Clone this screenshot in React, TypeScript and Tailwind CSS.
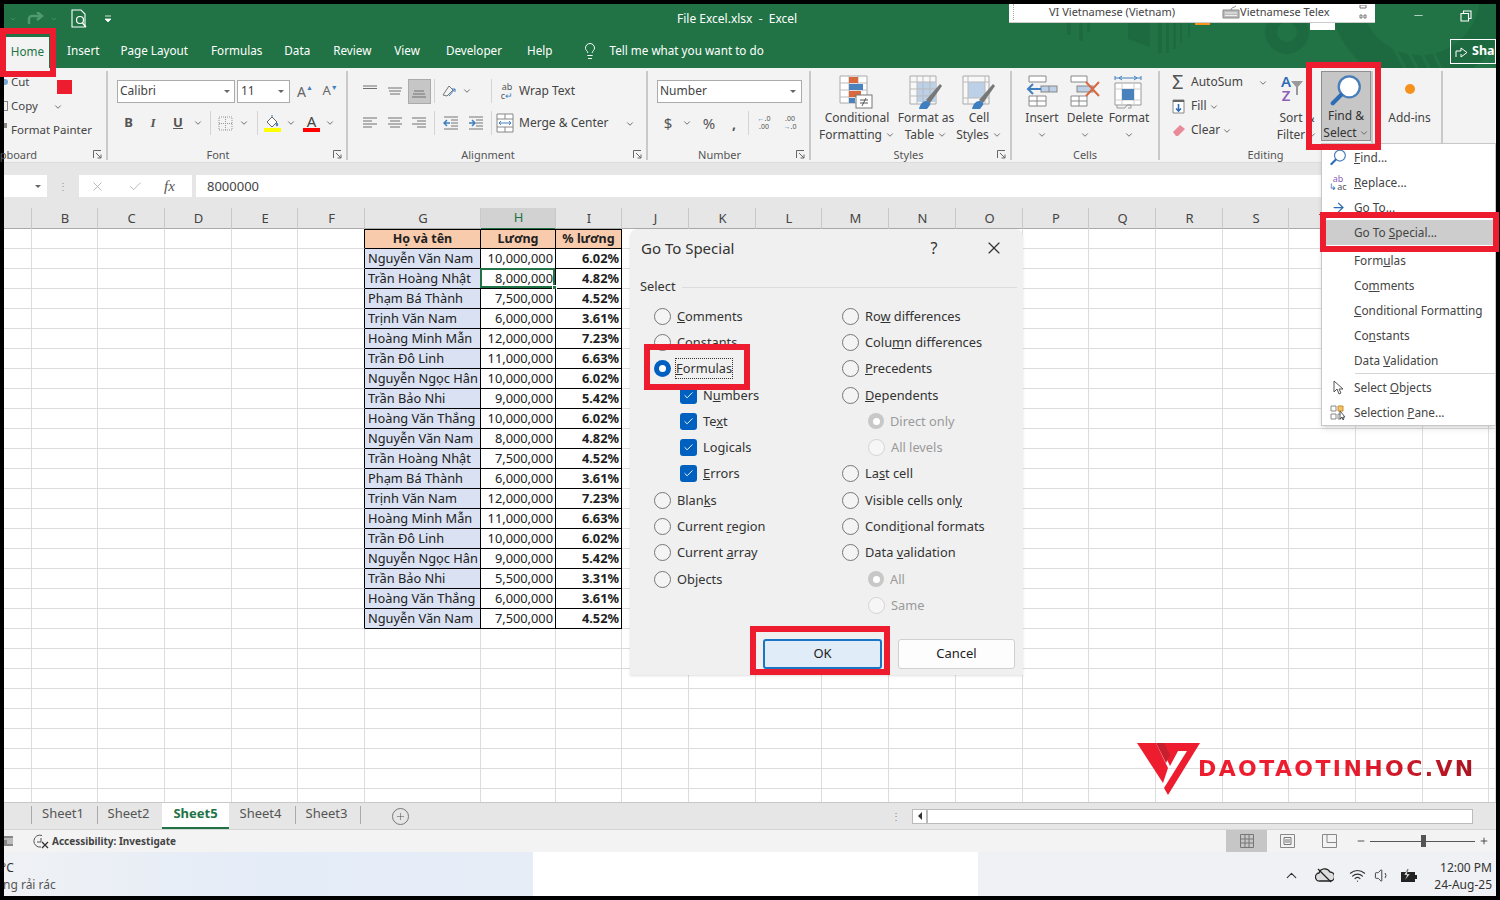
import React from "react";
import { ChevronDown, Lightbulb, X, Check, ArrowRight, Plus, ChevronUp, Wifi, Volume1, Minus } from "lucide-react";

const GRID = "grid grid-cols-[28px_66px_67px_67px_66px_67px_116px_75px_66px_67px_67px_66px_67px_67px_67px_66px_67px_67px_66px_67px_67px_66px_1fr]";
const COLS = ["", "B", "C", "D", "E", "F", "G", "H", "I", "J", "K", "L", "M", "N", "O", "P", "Q", "R", "S", "T", "U", "V", ""];

const DATA: [string, string, string][] = [
  ["Nguyễn Văn Nam", "10,000,000", "6.02%"],
  ["Trần Hoàng Nhật", "8,000,000", "4.82%"],
  ["Phạm Bá Thành", "7,500,000", "4.52%"],
  ["Trịnh Văn Nam", "6,000,000", "3.61%"],
  ["Hoàng Minh Mẫn", "12,000,000", "7.23%"],
  ["Trần Đô Linh", "11,000,000", "6.63%"],
  ["Nguyễn Ngọc Hân", "10,000,000", "6.02%"],
  ["Trần Bảo Nhi", "9,000,000", "5.42%"],
  ["Hoàng Văn Thắng", "10,000,000", "6.02%"],
  ["Nguyễn Văn Nam", "8,000,000", "4.82%"],
  ["Trần Hoàng Nhật", "7,500,000", "4.52%"],
  ["Phạm Bá Thành", "6,000,000", "3.61%"],
  ["Trịnh Văn Nam", "12,000,000", "7.23%"],
  ["Hoàng Minh Mẫn", "11,000,000", "6.63%"],
  ["Trần Đô Linh", "10,000,000", "6.02%"],
  ["Nguyễn Ngọc Hân", "9,000,000", "5.42%"],
  ["Trần Bảo Nhi", "5,500,000", "3.31%"],
  ["Hoàng Văn Thắng", "6,000,000", "3.61%"],
  ["Nguyễn Văn Nam", "7,500,000", "4.52%"],
];

function Mn({ t }: { t: string }) {
  const i = t.indexOf("_");
  if (i < 0) return <>{t}</>;
  return (
    <>
      {t.slice(0, i)}
      <span className="underline">{t[i + 1]}</span>
      {t.slice(i + 2)}
    </>
  );
}

const Chev = ({ s = 10 }: { s?: number }) => <ChevronDown size={s} strokeWidth={2} className="inline-block text-[#555] shrink-0" />;

function Lines({ kind }: { kind: string }) {
  const rows: Record<string, [number, number, number][]> = {
    top: [[1, 15, 3], [1, 15, 5.5]],
    mid: [[1, 15, 5], [2, 14, 8], [3, 13, 11]],
    bot: [[3, 13, 8], [2, 14, 11], [1, 15, 14]],
    left: [[1, 15, 3], [1, 10, 6], [1, 15, 9], [1, 10, 12]],
    center: [[1, 15, 3], [3, 13, 6], [1, 15, 9], [3, 13, 12]],
    right: [[1, 15, 3], [6, 15, 6], [1, 15, 9], [6, 15, 12]],
  };
  return (
    <svg width="16" height="16" viewBox="0 0 16 16">
      {rows[kind].map(([a, b, y], i) => (
        <line key={i} x1={a} x2={b} y1={y} y2={y} stroke="#707070" strokeWidth="1" />
      ))}
    </svg>
  );
}

function Launcher() {
  return (
    <svg width="9" height="9" viewBox="0 0 9 9" className="shrink-0">
      <path d="M0.5 8V0.5H8M3 3l5 5M8 4.5V8H4.5" fill="none" stroke="#666" strokeWidth="1" />
    </svg>
  );
}

function Group({ w, label, launcher, children, labelCls = "" }: { w: string; label?: string; launcher?: boolean; children: React.ReactNode; labelCls?: string }) {
  return (
    <div className={`${w} shrink-0 h-full flex flex-col border-r-2 border-[#c9c9c9] my-[3px] max-h-[89px]`}>
      <div className="h-[73px] shrink-0 -mt-[3px]">{children}</div>
      <div className="flex items-center h-4 mt-[5px] shrink-0">
        <div className={`flex-1 text-center text-[11px] text-[#555] leading-none ${labelCls}`}>{label}</div>
        {launcher && (
          <div className="w-[18px] flex justify-center">
            <Launcher />
          </div>
        )}
      </div>
    </div>
  );
}

function Large({ w, icon, l1, l2, cv }: { w: string; icon: React.ReactNode; l1: string; l2?: string; cv?: boolean }) {
  return (
    <div className={`${w} shrink-0 flex flex-col items-center`}>
      <div className="h-[41px] pt-[7px] flex items-start justify-center">{icon}</div>
      <div className="leading-[17px] text-[12px] text-[#444] whitespace-nowrap text-center">{l1}</div>
      <div className="leading-[17px] text-[12px] text-[#444] whitespace-nowrap h-[17px] flex items-center gap-[3px]">
        {l2}
        {cv && <Chev />}
      </div>
    </div>
  );
}

const CondIcon = () => (
  <svg width="36" height="34" viewBox="0 0 36 34">
    <path d="M1 1h27v27H1z" fill="#fff" stroke="#aaa" />
    <path d="M1 8h27M1 15h27M1 22h27M10 1v27M19 1v27" stroke="#bbb" />
    <rect x="10" y="2" width="9" height="6" fill="#d8693f" />
    <rect x="10" y="9" width="14" height="6" fill="#4a82bd" />
    <rect x="10" y="16" width="12" height="6" fill="#d8693f" />
    <rect x="10" y="23" width="6" height="5" fill="#4a82bd" />
    <rect x="17" y="20" width="16" height="13" fill="#fff" stroke="#777" />
    <path d="M21 25h8M21 28h8M27 23l-4 8" stroke="#555" />
  </svg>
);
const TableIcon = ({ cell }: { cell?: boolean }) => (
  <svg width="34" height="36" viewBox="0 0 34 36">
    <path d="M1 1h26v28H1z" fill="#f8f8f8" stroke="#aaa" />
    {cell ? (
      <>
        <rect x="6" y="7" width="17" height="16" fill="#bcd0e8" />
        <path d="M6 1v28M23 1v28M1 7h26M1 23h26" stroke="#bbb" />
      </>
    ) : (
      <>
        <rect x="8" y="7" width="19" height="20" fill="#bcd0e8" />
        <path d="M8 1v28M14 1v28M21 1v28M1 7h26M1 14h26M1 21h26" stroke="#bbb" />
      </>
    )}
    <path d="M17 25L31 9l2 2-12 17z" fill="#777" />
    <path d="M10 34c1-5 4-8 7-8s5 2 4 4l-3 4z" fill="#3f7fbf" />
  </svg>
);

const InsertIcon = () => (
  <svg width="32" height="34" viewBox="0 0 32 34">
    <path d="M3 1h17v6H3zM3 21h17v10H3zM11 21v10M3 26h17" fill="#fff" stroke="#888" />
    <rect x="15" y="11" width="16" height="6" fill="#bcd0e8" stroke="#888" />
    <path d="M23 11v6" stroke="#888" />
    <path d="M15 14H2M7 9l-5 5 5 5" fill="none" stroke="#3f7fbf" strokeWidth="2" />
  </svg>
);
const DeleteIcon = () => (
  <svg width="32" height="34" viewBox="0 0 32 34">
    <path d="M2 1h16v6H2zM2 21h16v10H2zM10 21v10M2 26h16" fill="#fff" stroke="#888" />
    <rect x="8" y="11" width="16" height="6" fill="#bcd0e8" stroke="#888" />
    <path d="M17 7l13 14M30 7L17 21" stroke="#d8693f" strokeWidth="2" />
  </svg>
);
const FormatIcon = () => (
  <svg width="32" height="36" viewBox="0 0 32 36">
    <path d="M2 3h26M2 1v4M28 1v4M6 3l3-2M6 3l3 2M24 3l-3-2M24 3l-3 2" fill="none" stroke="#3f7fbf" />
    <path d="M2 8h26v22H2z" fill="#fff" stroke="#999" />
    <path d="M9 8v22M21 8v22M2 14h26M2 25h26" stroke="#ccc" />
    <rect x="9" y="14" width="12" height="11" fill="#4a82bd" />
    <path d="M4 30v3h8l2-3h4v3h-3" fill="none" stroke="#999" />
  </svg>
);
const Mag = ({ s = 36 }: { s?: number }) => (
  <svg width={s} height={s} viewBox="0 0 36 36">
    <circle cx="21" cy="14" r="11.5" fill="#fff" stroke="#4a7ebb" strokeWidth="2.5" />
    <path d="M12 23L3 32" stroke="#2d6db5" strokeWidth="4.5" strokeLinecap="round" />
  </svg>
);

function Rad({ sel, dis }: { sel?: boolean; dis?: boolean }) {
  if (sel && !dis)
    return (
      <span className="w-[17px] h-[17px] rounded-full bg-[#0060c0] flex items-center justify-center shrink-0">
        <span className="w-[7px] h-[7px] rounded-full bg-white" />
      </span>
    );
  if (sel && dis)
    return (
      <span className="w-[16px] h-[16px] rounded-full bg-[#c8c8c8] flex items-center justify-center shrink-0">
        <span className="w-[7px] h-[7px] rounded-full bg-white" />
      </span>
    );
  return <span className={`w-[17px] h-[17px] rounded-full border-[1.5px] shrink-0 ${dis ? "border-[#d4d4d4] bg-[#f6f6f6]" : "border-[#777] bg-[#f4f4f4]"}`} />;
}

function Opt({ t, sel, dis, sub, check, focus }: { t: string; sel?: boolean; dis?: boolean; sub?: boolean; check?: boolean; focus?: boolean }) {
  return (
    <div className={`h-[26.3px] flex items-center gap-[6px] text-[12.8px] whitespace-nowrap ${sub ? "pl-[26px]" : ""} ${dis ? "text-[#9a9a9a]" : "text-[#333]"}`}>
      {check ? (
        <span className="w-[17px] h-[17px] rounded-[3px] bg-[#0060c0] flex items-center justify-center shrink-0">
          <Check size={11} color="#fff" strokeWidth={2} />
        </span>
      ) : (
        <Rad sel={sel} dis={dis} />
      )}
      <span className={focus ? "border border-dotted border-[#333] leading-[19px] -ml-[2px]" : "leading-[19px]"}>
        <Mn t={t} />
      </span>
    </div>
  );
}

function MenuItem({ t, icon, active }: { t: string; icon?: React.ReactNode; active?: boolean }) {
  return (
    <div className={`h-[25px] flex items-center text-[11.8px] text-[#444] whitespace-nowrap ${active ? "bg-[#cdcdcd]" : ""}`}>
      <span className="w-[32px] flex justify-center shrink-0">{icon}</span>
      <span>
        <Mn t={t} />
      </span>
    </div>
  );
}

function RedBox({ cls }: { cls: string }) {
  return <div className={`absolute border-[6px] border-[#ed1c2e] ${cls}`} />;
}

function Slot({ w, children }: { w: string; children?: React.ReactNode }) {
  return <div className={`${w} shrink-0 flex items-center justify-center`}>{children}</div>;
}
const Sep = () => <div className="w-px h-[24px] bg-[#d4d4d4] shrink-0" />;
const SepSlot = ({ w }: { w: string }) => (
  <div className={`${w} shrink-0 flex justify-center`}>
    <Sep />
  </div>
);

export default function App() {
  const tabs: [string, string][] = [
    ["Insert", "mb-[3px] -mr-[2px]"],
    ["Page Layout", "mb-[3px]"],
    ["Formulas", "mb-[3px] -mr-[1px]"],
    ["Data", "mb-[3px]"],
    ["Review", "mb-[3px]"],
    ["View", "mb-[3px] mr-[3px]"],
    ["Developer", "mb-[3px] mr-[2px]"],
    ["Help", "mb-[3px]"],
  ];
  const rows = Array.from({ length: 29 });
  return (
    <div className="relative w-[1500px] h-[900px] overflow-hidden bg-black pt-1 pb-1 pl-1 pr-1 font-['Noto_Sans',sans-serif] text-[12px] text-[#444]">
      <div className="flex flex-col h-full bg-white">
        {/* Title + tabs */}
        <div className="relative h-[64px] shrink-0 bg-[#217346] overflow-hidden">
          <svg className="absolute right-0 top-0" width="460" height="64" viewBox="0 0 460 64">
            <g fill="none" stroke="#1e6a40">
              <circle cx="251" cy="28" r="16" strokeWidth="12" />
              <circle cx="384" cy="-9" r="75" strokeWidth="30" />
            </g>
            <g stroke="#217346" strokeWidth="3">
              <path d="M345 20l24 44M355 14l26 50M365 8l28 56M375 2l30 62" />
            </g>
            <path d="M430 64l30-44v-14l-40 58z" fill="#1e6a40" />
            <g fill="#1e6a40">
              <path d="M31 19h4v12h-4zM43 19h4v18h-4zM51 19h3v9h-3zM92 19h22v24l-22-8zM122 19h4v30h-4zM130 19h3v30h-3zM137 19h3v26h-3zM144 19h2v20h-2zM152 19h2v14h-2z" />
            </g>
          </svg>
          <div className="relative h-[33px] pb-[4px] flex items-center text-white">
            <div className="w-[673px] shrink-0 flex items-center">
              <ChevronDown size={8} color="#4f9a70" className="ml-[5px]" />
              <svg width="18" height="14" viewBox="0 0 18 14" className="ml-[10px]">
                <path d="M2 12V7a3 3 0 013-3h9M10 0l5 4-5 4" fill="none" stroke="#4f9a70" strokeWidth="2.4" />
              </svg>
              <ChevronDown size={8} color="#4f9a70" className="ml-[5px]" />
              <svg width="17" height="20" viewBox="0 0 17 20" className="ml-[13px]">
                <path d="M1 1h9l4 4v13H1z" fill="none" stroke="#fff" strokeWidth="1.1" />
                <circle cx="9" cy="11" r="3.5" fill="none" stroke="#fff" strokeWidth="1.2" />
                <path d="M11.5 14l3.5 4" stroke="#fff" strokeWidth="1.3" />
              </svg>
              <svg width="6" height="8" viewBox="0 0 6 8" className="ml-[17px]">
                <path d="M0 1h6M0 4h6l-3 3z" stroke="#fff" fill="#fff" strokeWidth="0.8" />
              </svg>
            </div>
            <div className="whitespace-pre text-[12px]">File Excel.xlsx  -  Excel</div>
            <div className="ml-auto flex items-center -mt-[6px]">
              <Minus size={13} strokeWidth={1.2} color="#fff" className="mr-[35px]" />
              <svg width="12" height="12" viewBox="0 0 12 12" className="mr-[24px]">
                <path d="M1 3.5h7.5V11H1zM3.5 3.5V1H11v7.5H8.5" fill="none" stroke="#fff" strokeWidth="1.1" />
              </svg>
            </div>
          </div>
          <div className="relative h-[31px] flex items-start text-white text-[11.7px]">
            <div className="flex items-center h-[31px] gap-[23px] pl-[7px]">
              <div className="w-[43px] h-[31px] -mx-[5px] pb-[2px] bg-[#f3f3f3] text-[#217346] flex items-center justify-center whitespace-nowrap">Home</div>
              {tabs.map(([t, c]) => (
                <div key={t} className={`whitespace-nowrap ${c}`}>
                  {t}
                </div>
              ))}
              <Lightbulb size={18} strokeWidth={1.3} className="ml-[5px] mb-[3px]" />
              <div className="whitespace-nowrap -ml-[12px] mb-[3px]">Tell me what you want to do</div>
            </div>
            <div className="ml-auto mt-[2px] h-[25px] w-[46px] border border-white flex items-center pl-[4px] gap-[4px] overflow-hidden font-bold text-[12.5px]">
              <svg width="13" height="13" viewBox="0 0 13 13" className="shrink-0">
                <path d="M1 12V6h5V3l6 4.5-6 4.5V9" fill="none" stroke="#fff" />
              </svg>
              Sha
            </div>
          </div>
        </div>

        {/* Ribbon */}
        <div className="h-[95px] shrink-0 bg-[#f3f3f3] flex border-b border-[#dcdcdc]">
          <Group w="w-[104px]" launcher labelCls="text-left -ml-[17px]" label="Clipboard">
            <div className="pt-[2px] overflow-hidden text-[11.5px]">
              <div className="h-6 flex items-center whitespace-nowrap">
                <span className="w-[7px] h-[6px] mr-[0px] shrink-0"><span className="block w-[4px] h-[6px] bg-[#7aa6d6] rounded-r-full" /></span>
                Cut
              </div>
              <div className="h-6 flex items-center whitespace-nowrap">
                <span className="w-[7px] h-[10px] shrink-0"><span className="block w-[4px] h-[10px] border border-l-0 border-[#888]" /></span>
                Copy
                <span className="ml-[15px]">
                  <Chev />
                </span>
              </div>
              <div className="h-6 flex items-center whitespace-nowrap">
                <span className="w-[7px] h-[6px] shrink-0 -mt-[8px]"><span className="block w-[3px] h-[5px] bg-[#8a8a8a]" /></span>
                Format Painter
              </div>
            </div>
          </Group>

          <Group w="w-[240px]" label="Font" launcher>
            <div className="pl-[9px] pt-[11px]">
              <div className="h-6 flex items-center">
                <div className="w-[118px] h-[23px] bg-white border border-[#ababab] flex items-center justify-between px-[2px] mr-[2px]">
                  <span>Calibri</span>
                  <span className="mr-[2px] border-x-[3px] border-t-[3px] border-x-transparent border-t-[#666]" />
                </div>
                <div className="w-[53px] h-[23px] bg-white border border-[#ababab] flex items-center justify-between px-[3px]">
                  <span>11</span>
                  <span className="mr-[2px] border-x-[3px] border-t-[3px] border-x-transparent border-t-[#666]" />
                </div>
                <Slot w="w-[28px] ml-[1px] text-[14px] text-[#666]">
                  A<sup className="text-[7px] text-[#3f7fbf]">▲</sup>
                </Slot>
                <Slot w="w-[22px] text-[13px] text-[#666]">
                  A<sup className="text-[7px] text-[#3f7fbf]">▼</sup>
                </Slot>
              </div>
              <div className="h-6 flex items-center mt-[8px] text-[#555]">
                <Slot w="w-[23px] font-bold text-[13px]">B</Slot>
                <Slot w="w-[26px] italic font-bold text-[13px] font-['Liberation_Serif',serif]">I</Slot>
                <Slot w="w-[24px] underline font-bold text-[13px]">U</Slot>
                <Slot w="w-[15px]">
                  <Chev />
                </Slot>
                <SepSlot w="w-[10px]" />
                <Slot w="w-[20px]">
                  <svg width="15" height="15" viewBox="0 0 15 15">
                    <path d="M1 1h13v13H1zM7.500 1v13M1 7.500h13" fill="none" stroke="#999" strokeDasharray="1 1" />
                  </svg>
                </Slot>
                <Slot w="w-[18px]">
                  <Chev />
                </Slot>
                <SepSlot w="w-[8px]" />
                <Slot w="w-[22px]">
                  <div className="flex flex-col items-center">
                    <svg width="14" height="13" viewBox="0 0 14 13">
                      <path d="M2 7l5-5 5 5-5 5z" fill="#fff" stroke="#666" />
                      <path d="M7 2V0M12 8c1 1 1 3 0 3s-1-2 0-3" stroke="#3f7fbf" fill="#3f7fbf" />
                    </svg>
                    <div className="w-[17px] h-[4px] bg-[#ffff00]" />
                  </div>
                </Slot>
                <Slot w="w-[15px]">
                  <Chev />
                </Slot>
                <Slot w="w-[27px]">
                  <div className="flex flex-col items-center leading-none">
                    <span className="text-[15px] leading-[13px] text-[#444]">A</span>
                    <div className="w-[17px] h-[4px] bg-[#ff0000]" />
                  </div>
                </Slot>
                <Slot w="w-[9px]">
                  <Chev />
                </Slot>
              </div>
            </div>
          </Group>

          <Group w="w-[300px]" label="Alignment" launcher>
            <div className="pl-[9px] pt-[11px]">
              <div className="h-6 flex items-center">
                <Slot w="w-[25px]"><Lines kind="top" /></Slot>
                <Slot w="w-[25px]"><Lines kind="mid" /></Slot>
                <Slot w="w-[24px]">
                  <div className="w-[23px] h-[25px] bg-[#c6c6c6] border border-[#ababab] flex items-center justify-center">
                    <Lines kind="bot" />
                  </div>
                </Slot>
                <SepSlot w="w-[7px]" />
                <Slot w="w-[22px]">
                  <svg width="17" height="16" viewBox="0 0 17 16">
                    <path d="M2 12L8 3l4 4-6 6z" fill="none" stroke="#777" />
                    <path d="M8 13l6-7M14 6h-3M14 6v3" stroke="#3f7fbf" fill="none" />
                  </svg>
                </Slot>
                <Slot w="w-[14px]"><Chev /></Slot>
                <SepSlot w="w-[34px]" />
                <div className="w-[26px] -ml-[14px] text-center text-[9px] leading-[9px] text-[#555]">
                  ab<br />c<span className="text-[#3f7fbf]">↵</span>
                </div>
                <span className="ml-[-1px] whitespace-nowrap">Wrap Text</span>
              </div>
              <div className="h-6 flex items-center mt-[8px]">
                <Slot w="w-[25px]"><Lines kind="left" /></Slot>
                <Slot w="w-[25px]"><Lines kind="center" /></Slot>
                <Slot w="w-[24px]"><Lines kind="right" /></Slot>
                <SepSlot w="w-[7px]" />
                <Slot w="w-[25px]">
                  <svg width="16" height="14" viewBox="0 0 16 14">
                    <path d="M1 1h14M8 4h7M8 7h7M8 10h7M1 13h14" stroke="#777" />
                    <path d="M7 7H1M4 4L1 7l3 3" fill="none" stroke="#3f7fbf" strokeWidth="1.5" />
                  </svg>
                </Slot>
                <Slot w="w-[26px]">
                  <svg width="16" height="14" viewBox="0 0 16 14">
                    <path d="M1 1h14M8 4h7M8 7h7M8 10h7M1 13h14" stroke="#777" />
                    <path d="M1 7h6M4 4l3 3-3 3" fill="none" stroke="#3f7fbf" strokeWidth="1.5" />
                  </svg>
                </Slot>
                <SepSlot w="w-[4px]" />
                <Slot w="w-[28px]">
                  <svg width="18" height="20" viewBox="0 0 18 20" className="-ml-[4px]">
                    <path d="M1 1h16v18H1zM1 6h16M1 14h16M9 1v5M9 14v5" fill="#fff" stroke="#888" />
                    <path d="M3 10h12M5 8l-2 2 2 2M13 8l2 2-2 2" fill="none" stroke="#3f7fbf" />
                  </svg>
                </Slot>
                <span className="whitespace-nowrap -ml-[2px]">Merge &amp; Center</span>
                <span className="ml-[16px]"><Chev /></span>
              </div>
            </div>
          </Group>

          <Group w="w-[163px]" label="Number" launcher>
            <div className="pl-[9px] pt-[11px]">
              <div className="h-6 flex items-center">
                <div className="w-[145px] h-[23px] bg-white border border-[#ababab] flex items-center justify-between px-[2px]">
                  <span>Number</span>
                  <span className="mr-[3px] border-x-[3px] border-t-[3px] border-x-transparent border-t-[#666]" />
                </div>
              </div>
              <div className="h-6 flex items-center mt-[8px] text-[#555]">
                <Slot w="w-[22px] text-[15px]">$</Slot>
                <Slot w="w-[16px]"><Chev /></Slot>
                <Slot w="w-[28px] text-[15px]">%</Slot>
                <Slot w="w-[22px] font-bold text-[14px]">,</Slot>
                <SepSlot w="w-[7px]" />
                <Slot w="w-[24px]">
                  <div className="text-[7px] leading-[8px] text-center"><span className="text-[#3f7fbf]">←</span>.0<br />.00</div>
                </Slot>
                <Slot w="w-[28px]">
                  <div className="text-[7px] leading-[8px] text-center">.00<br /><span className="text-[#3f7fbf]">→</span>.0</div>
                </Slot>
              </div>
            </div>
          </Group>

          <Group w="w-[201px]" label="Styles" launcher labelCls="pl-[14px]">
            <div className="flex pl-[11px]">
              <Large w="w-[70px]" icon={<CondIcon />} l1="Conditional" l2="Formatting" cv />
              <Large w="w-[68px]" icon={<TableIcon />} l1="Format as" l2="Table" cv />
              <Large w="w-[38px]" icon={<TableIcon cell />} l1="Cell" l2="Styles" cv />
            </div>
          </Group>

          <Group w="w-[148px]" label="Cells">
            <div className="flex pl-[8px]">
              <Large w="w-[44px]" icon={<InsertIcon />} l1="Insert" cv />
              <Large w="w-[42px]" icon={<DeleteIcon />} l1="Delete" cv />
              <Large w="w-[46px]" icon={<FormatIcon />} l1="Format" cv />
            </div>
          </Group>

          <Group w="w-[213px]" label="Editing">
            <div className="flex">
              <div className="w-[118px] shrink-0 pl-[12px] pt-[2px]">
                <div className="h-6 flex items-center whitespace-nowrap">
                  <span className="w-[19px] text-[20px] leading-none text-[#555]">Σ</span>
                  AutoSum
                  <span className="ml-[15px]"><Chev /></span>
                </div>
                <div className="h-6 flex items-center whitespace-nowrap">
                  <span className="w-[19px]">
                    <svg width="13" height="15" viewBox="0 0 13 15">
                      <path d="M1 1h11v13H1z" fill="#fff" stroke="#888" />
                      <path d="M1 2h11" stroke="#666" strokeWidth="2" />
                      <path d="M6.500 5v7M4 9.500l2.500 2.500L9 9.500" fill="none" stroke="#2d6db5" strokeWidth="1.600" />
                    </svg>
                  </span>
                  Fill
                  <span className="ml-[2px]"><Chev /></span>
                </div>
                <div className="h-6 flex items-center whitespace-nowrap">
                  <span className="w-[19px]">
                    <svg width="14" height="13" viewBox="0 0 14 13">
                      <path d="M1 8l7-7 5 4-7 7H4z" fill="#e98a9a" />
                    </svg>
                  </span>
                  Clear
                  <span className="ml-[2px]"><Chev /></span>
                </div>
              </div>
              <div className="w-[38px] shrink-0 flex flex-col items-center">
                <div className="h-[41px] pt-[6px] -ml-[10px] flex items-start">
                  <div className="flex flex-col items-center text-[15px] leading-[14px] font-semibold">
                    <span className="text-[#2d6db5]">A</span>
                    <span className="text-[#8e5fb8]">Z</span>
                  </div>
                  <svg width="12" height="14" viewBox="0 0 12 14" className="mt-[7px]">
                    <path d="M0 0h12L7 6v8H5V6z" fill="#999" />
                  </svg>
                </div>
                <div className="leading-[17px] whitespace-nowrap">Sort &amp;</div>
                <div className="leading-[17px] whitespace-nowrap flex items-center gap-[2px]">Filter <Chev /></div>
              </div>
              <div className="ml-[5px] w-[50px] h-[70px] mt-[3px] shrink-0 bg-[#c6c6c6] border border-[#8f8f8f] flex flex-col items-center text-[#333]">
                <div className="h-[37px] pt-[2px]"><Mag s={33} /></div>
                <div className="leading-[17px] whitespace-nowrap">Find &amp;</div>
                <div className="leading-[17px] whitespace-nowrap flex items-center gap-[2px]">Select <Chev /></div>
              </div>
            </div>
          </Group>

          <Group w="w-[70px]">
            <div className="flex flex-col items-center pl-[5px]">
              <div className="h-[41px] pt-[16px]">
                <div className="w-[10px] h-[10px] rounded-full bg-[#f5921e]" />
              </div>
              <div className="leading-[17px]">Add-ins</div>
            </div>
          </Group>
        </div>

        {/* Formula bar */}
        <div className="h-[45px] shrink-0 bg-[#e6e6e6] pt-[12px]">
          <div className="h-[22px] flex items-center pr-0">
            <div className="w-[43px] h-full bg-white flex items-center justify-end pr-[6px]">
              <span className="border-x-[3px] border-t-[3px] border-x-transparent border-t-[#666]" />
            </div>
            <div className="w-[32px] text-center text-[#999] tracking-tighter text-[10px]">⋮</div>
            <div className="w-[113px] h-full bg-white flex items-center text-[#aaa]">
              <X size={15} strokeWidth={1.3} className="ml-[11px]" />
              <Check size={15} strokeWidth={1.3} className="ml-[23px]" />
              <span className="ml-[21px] italic font-['Liberation_Serif',serif] text-[15px] text-[#555]">fx</span>
            </div>
            <div className="flex-1 h-full bg-white ml-[4px] pl-[11px] pt-px flex items-center text-[13px] text-[#444]">8000000</div>
          </div>
        </div>

        {/* Column headers */}
        <div className={`${GRID} h-[21px] shrink-0 bg-[#e6e6e6] border-b border-[#ababab]`}>
          {COLS.map((c, i) => (
            <div key={i} className={`flex items-center justify-center pl-px text-[13px] border-r border-[#c8c8c8] ${c === "H" ? "bg-[#d2d2d2] text-[#217346] border-b-2 border-b-[#217346]" : "text-[#444]"}`}>
              {c}
            </div>
          ))}
        </div>

        {/* Sheet */}
        <div className="flex-1 min-h-0 overflow-hidden bg-white">
          <div className={`${GRID} auto-rows-[20px] text-[12.8px] text-[#222]`}>
            {rows.map((_, r) =>
              COLS.map((_c, c) => {
                const inT = r <= DATA.length;
                const tbl = inT && c >= 6 && c <= 8;
                if (!tbl) {
                  return <div key={`${r}-${c}`} className={`border-b border-[#dcdcdc] border-r ${c === 5 && inT ? "border-r-black" : "border-r-[#dcdcdc]"}`} />;
                }
                if (r === 0) {
                  const h = ["Họ và tên", "Lương", "% lương"][c - 6];
                  return (
                    <div key={`${r}-${c}`} className="bg-[#f8cbad] border-y border-r border-black pt-px flex items-center justify-center font-bold text-[12.5px]">
                      {h}
                    </div>
                  );
                }
                const d = DATA[r - 1];
                if (c === 6) return <div key={`${r}-${c}`} className="bg-[#d9e1f2] border-b border-r border-black pt-px flex items-center pl-[3px] whitespace-nowrap overflow-hidden">{d[0]}</div>;
                if (c === 7)
                  return (
                    <div key={`${r}-${c}`} className="relative border-b border-r border-black pt-px flex items-center justify-end pr-[2px]">
                      {d[1]}
                      {r === 2 && (
                        <>
                          <div className="absolute -left-px -top-px right-0 bottom-0 border-2 border-[#217346]" />
                          <div className="absolute -right-[2px] -bottom-[2px] w-[5px] h-[5px] bg-[#217346] border border-white" />
                        </>
                      )}
                    </div>
                  );
                return <div key={`${r}-${c}`} className="border-b border-r border-black pt-px flex items-center justify-end pr-[2px] font-bold">{d[2]}</div>;
              })
            )}
          </div>
        </div>

        {/* Sheet tabs */}
        <div className="h-[27px] shrink-0 bg-[#e6e6e6] border-t border-[#c8c8c8] flex items-center text-[13px] text-[#555]">
          <div className="ml-[27px] w-px h-[18px] bg-[#aaa] -mt-[3px]" />
          <div className="w-[65px] text-center pr-[3px] -mt-[4px]">Sheet1</div>
          <div className="w-px h-[18px] bg-[#aaa] -mt-[3px]" />
          <div className="w-[64px] text-center pr-[3px] -mt-[4px]">Sheet2</div>
          <div className="w-[67px] h-full bg-white border-b-2 border-[#217346] pb-[2px] flex items-center justify-center font-bold text-[#217346]">Sheet5</div>
          <div className="w-[66px] text-center pr-[3px] -mt-[4px]">Sheet4</div>
          <div className="w-px h-[18px] bg-[#aaa] -mt-[3px]" />
          <div className="w-[64px] text-center pr-[3px] -mt-[4px]">Sheet3</div>
          <div className="w-px h-[18px] bg-[#aaa] -mt-[3px]" />
          <div className="ml-[31px] w-[17px] h-[17px] rounded-full border border-[#777] flex items-center justify-center">
            <Plus size={11} strokeWidth={1.2} />
          </div>
          <div className="ml-[482px] text-[#888] text-[10px]">⋮</div>
          <div className="ml-[11px] w-[15px] h-[15px] bg-white border border-[#bbb] flex items-center justify-center">
            <span className="border-y-[4px] border-r-[4px] border-y-transparent border-r-[#333]" />
          </div>
          <div className="w-[546px] h-[15px] bg-white border border-[#bbb]" />
        </div>

        {/* Status */}
        <div className="h-[23px] shrink-0 bg-[#f3f3f3] border-t border-[#d4d4d4] flex items-center text-[#444]">
          <svg width="9" height="12" viewBox="0 0 9 12" className="shrink-0">
            <path d="M0 1h9v10H0z" fill="#888" />
            <path d="M0 4h9M3 6h6M3 8h6" stroke="#eee" />
          </svg>
          <svg width="17" height="15" viewBox="0 0 17 15" className="ml-[20px] shrink-0">
            <path d="M9 1.500A6 6 0 108 13M8 4v4M4 8h4" fill="none" stroke="#555" />
            <path d="M9 8l6 6M15 8l-6 6" stroke="#333" strokeWidth="1.300" />
          </svg>
          <span className="ml-[2px] font-bold text-[10px] whitespace-nowrap">Accessibility: Investigate</span>
          <div className="ml-auto flex items-center h-full">
            <div className="w-[41px] h-full bg-[#c6c6c6] flex items-center justify-center">
              <svg width="14" height="14" viewBox="0 0 14 14">
                <path d="M.5.5h13v13H.5zM5 .5v13M9 .5v13M.5 5h13M.5 9h13" fill="none" stroke="#777" />
              </svg>
            </div>
            <Slot w="w-[41px]">
              <svg width="15" height="14" viewBox="0 0 15 14">
                <path d="M.5.5h14v13H.5z" fill="none" stroke="#888" />
                <path d="M4 3.500h7v7H4zM5 6h5M5 8h5" fill="none" stroke="#777" />
              </svg>
            </Slot>
            <Slot w="w-[42px]">
              <svg width="15" height="14" viewBox="0 0 15 14">
                <path d="M.5.5h14v13H.5zM5 .5v8h9" fill="none" stroke="#888" />
              </svg>
            </Slot>
            <Minus size={10} className="ml-[6px] text-[#333]" />
            <div className="relative ml-[4px] w-[105px] h-px bg-[#555]">
              <div className="absolute left-[51px] -top-[6px] w-[5px] h-[12px] bg-[#555]" />
            </div>
            <Plus size={10} className="ml-[4px] mr-[7px] text-[#333]" />
          </div>
        </div>

        {/* Taskbar */}
        <div className="h-[44px] shrink-0 flex bg-[#eff1f4] text-[#333]">
          <div className="w-[529px] shrink-0 bg-gradient-to-r from-[#eff1f4] via-[#e4ecf8] to-[#e6edf7] pt-[3px] flex flex-col justify-center leading-[17px] text-[12px] overflow-hidden">
            <div>
              <span className="-ml-[3px]">°C</span>
            </div>
            <div className="text-[#555] -ml-[1px]">ng rải rác</div>
          </div>
          <div className="w-[445px] shrink-0 bg-white" />
          <div className="flex-1 flex items-center justify-end pr-[4px] pt-[3px]">
            <ChevronUp size={17} strokeWidth={1.6} />
            <svg width="19" height="15" viewBox="0 0 19 15" className="ml-[15px]">
              <path d="M5 13a4 4 0 01-1-8 6 6 0 0111-1 4.500 4.500 0 010 9z" fill="#ddd" stroke="#222" strokeWidth="1.300" />
              <path d="M3 1l13 13" stroke="#222" strokeWidth="1.300" />
            </svg>
            <Wifi size={17} strokeWidth={1.6} className="ml-[15px]" />
            <Volume1 size={17} strokeWidth={1.3} className="ml-[8px]" />
            <svg width="18" height="14" viewBox="0 0 18 14" className="ml-[9px]">
              <path d="M1 3h14v10H1z" fill="#222" />
              <path d="M15 6h2v4h-2z" fill="#222" />
              <path d="M8 0L4 6h3l-2 5 5-6H7z" fill="#fff" stroke="#222" strokeWidth="0.500" />
            </svg>
            <div className="ml-[16px] text-right leading-[17px] text-[12px] whitespace-nowrap">
              <div>12:00 PM</div>
              <div>24-Aug-25</div>
            </div>
          </div>
        </div>
      </div>

      {/* Language bar */}
      <div className="absolute left-[1009px] top-1 w-[366px] h-[19px] pb-[2px] bg-white border-b border-[#ccc] flex items-center text-[11px] text-[#444] whitespace-nowrap">
        <div className="ml-[4px] h-full border-l border-dotted border-[#aaa]" />
        <span className="ml-[35px]">VI Vietnamese (Vietnam)</span>
        <svg width="18" height="14" viewBox="0 0 18 14" className="ml-[47px]">
          <path d="M1 5h16v8H1z" fill="#bbb" stroke="#888" />
          <path d="M3 8h12M3 10.500h12" stroke="#eee" />
          <path d="M9 5c0-3 3-2 5-4" fill="none" stroke="#888" />
        </svg>
        <span>Vietnamese Telex</span>
        <svg width="8" height="14" viewBox="0 0 8 14" className="ml-[29px]">
          <path d="M1 0h6v3H1zM1 10v3h2v-3zM5 10v3h2v-3z" fill="none" stroke="#777" />
        </svg>
      </div>
      <div className="absolute left-[1310px] top-[23px] w-[25px] h-[7px] bg-white" />
      <div className="absolute left-[1195px] top-[23px] w-[15px] h-[2px] bg-[#f5921e]" />

      {/* Red square */}
      <div className="absolute left-[57px] top-[80px] w-[15px] h-[14px] bg-[#ed1c2e]" />

      {/* Find menu */}
      <div className="absolute left-[1321px] top-[143px] w-[175px] h-[283px] bg-white border border-[#c8c8c8] shadow-md pt-[1px]">
        <MenuItem t="_Find..." icon={<Mag s={17} />} />
        <MenuItem
          t="_Replace..."
          icon={
            <span className="text-[9px] leading-[8px] text-center text-[#555]">
              <span className="text-[#8e5fb8]">ab</span>
              <br />
              <span className="text-[#2d6db5]">↳</span>ac
            </span>
          }
        />
        <MenuItem t="_Go To..." icon={<ArrowRight size={15} color="#2d6db5" strokeWidth={2} />} />
        <MenuItem t="Go To _Special..." active />
        <div className="h-[3px]" />
        <MenuItem t="Form_ulas" />
        <MenuItem t="Co_mments" />
        <MenuItem t="_Conditional Formatting" />
        <MenuItem t="Co_nstants" />
        <MenuItem t="Data _Validation" />
        <div className="ml-[33px] h-px bg-[#d4d4d4] mb-[1px]" />
        <MenuItem
          t="Select _Objects"
          icon={
            <svg width="11" height="15" viewBox="0 0 11 15">
              <path d="M1 1v11l3-3 2 5 2-1-2-4h4z" fill="#fff" stroke="#555" />
            </svg>
          }
        />
        <MenuItem
          t="Selection _Pane..."
          icon={
            <svg width="16" height="15" viewBox="0 0 16 15">
              <path d="M1 1h5v5H1zM1 9h5v5H1zM8 9h3v5H8z" fill="#fff" stroke="#888" />
              <path d="M8 1h5v5H8z" fill="#f5c26b" stroke="#c98f2e" />
              <path d="M10 6v8l2-2 1 3 1-1-1-2h2z" fill="#fff" stroke="#555" />
            </svg>
          }
        />
      </div>

      {/* Dialog */}
      <div className="absolute left-[630px] top-[229px] w-[393px] h-[446px] bg-[#f0f0f0] rounded-t-lg flex flex-col shadow-sm">
        <div className="h-[38px] shrink-0 flex items-center pl-[11px] text-[15px] text-[#333]">
          Go To Special
          <span className="ml-[196px] text-[16px]">?</span>
          <X size={20} strokeWidth={1.4} className="ml-[47px]" />
        </div>
        <div className="h-[36px] pt-[4px] shrink-0 flex items-center pl-[10px] pr-[6px] text-[12.8px] text-[#333]">
          <span>Select</span>
          <div className="flex-1 h-px bg-[#dcdcdc] ml-[6px]" />
        </div>
        <div className="flex pl-[24px]">
          <div className="w-[188px] shrink-0">
            <Opt t="_Comments" />
            <Opt t="Co_nstants" />
            <Opt t="_Formulas" sel focus />
            <Opt t="N_umbers" sub check />
            <Opt t="Te_xt" sub check />
            <Opt t="Lo_gicals" sub check />
            <Opt t="_Errors" sub check />
            <Opt t="Blan_ks" />
            <Opt t="Current _region" />
            <Opt t="Current _array" />
            <Opt t="Ob_jects" />
          </div>
          <div className="flex-1">
            <Opt t="Ro_w differences" />
            <Opt t="Colu_mn differences" />
            <Opt t="_Precedents" />
            <Opt t="_Dependents" />
            <Opt t="Direct only" sub sel dis />
            <Opt t="All levels" sub dis />
            <Opt t="La_st cell" />
            <Opt t="Visible cells onl_y" />
            <Opt t="Condi_tional formats" />
            <Opt t="Data _validation" />
            <Opt t="All" sub sel dis />
            <Opt t="Same" sub dis />
          </div>
        </div>
        <div className="flex justify-end gap-[16px] pr-[8px] mt-[20px] text-[13px] text-[#222]">
          <div className="w-[119px] h-[30px] bg-[#e0ecf8] border-2 border-[#1a75c4] rounded-[3px] flex items-center justify-center">OK</div>
          <div className="w-[117px] h-[30px] bg-[#fdfdfd] border border-[#d0d0d0] rounded-[3px] flex items-center justify-center">Cancel</div>
        </div>
      </div>

      {/* Red highlight frames */}
      <RedBox cls="left-0 top-[28px] w-[56px] h-[49px]" />
      <RedBox cls="left-[1306px] top-[62px] w-[75px] h-[88px]" />
      <RedBox cls="left-[1320px] top-[212px] w-[179px] h-[40px]" />
      <RedBox cls="left-[644px] top-[344px] w-[106px] h-[46px]" />
      <RedBox cls="left-[750px] top-[626px] w-[140px] h-[49px]" />

      {/* Logo */}
      <div className="absolute left-[1137px] top-[743px] flex items-start">
        <svg width="64" height="53" viewBox="0 0 64 53" className="shrink-0">
          <path d="M0 0h19l12 25-5 15z" fill="#ed1c2e" />
          <path d="M22 0h41L31 52l-4-7L50 8h-9l-8 15z" fill="#ed1c2e" />
          <path d="M19 0h8l6 12-4 8z" fill="#c71f2d" />
        </svg>
        <span className="-ml-[3px] mt-[14px] text-[22px] leading-[24px] font-bold tracking-[2.4px] whitespace-nowrap bg-gradient-to-r from-[#ed1c2e] via-[#ed1c2e] to-[#a81522] bg-clip-text text-transparent font-['DejaVu_Sans',sans-serif]">
          DAOTAOTINHOC.VN
        </span>
      </div>
    </div>
  );
}
